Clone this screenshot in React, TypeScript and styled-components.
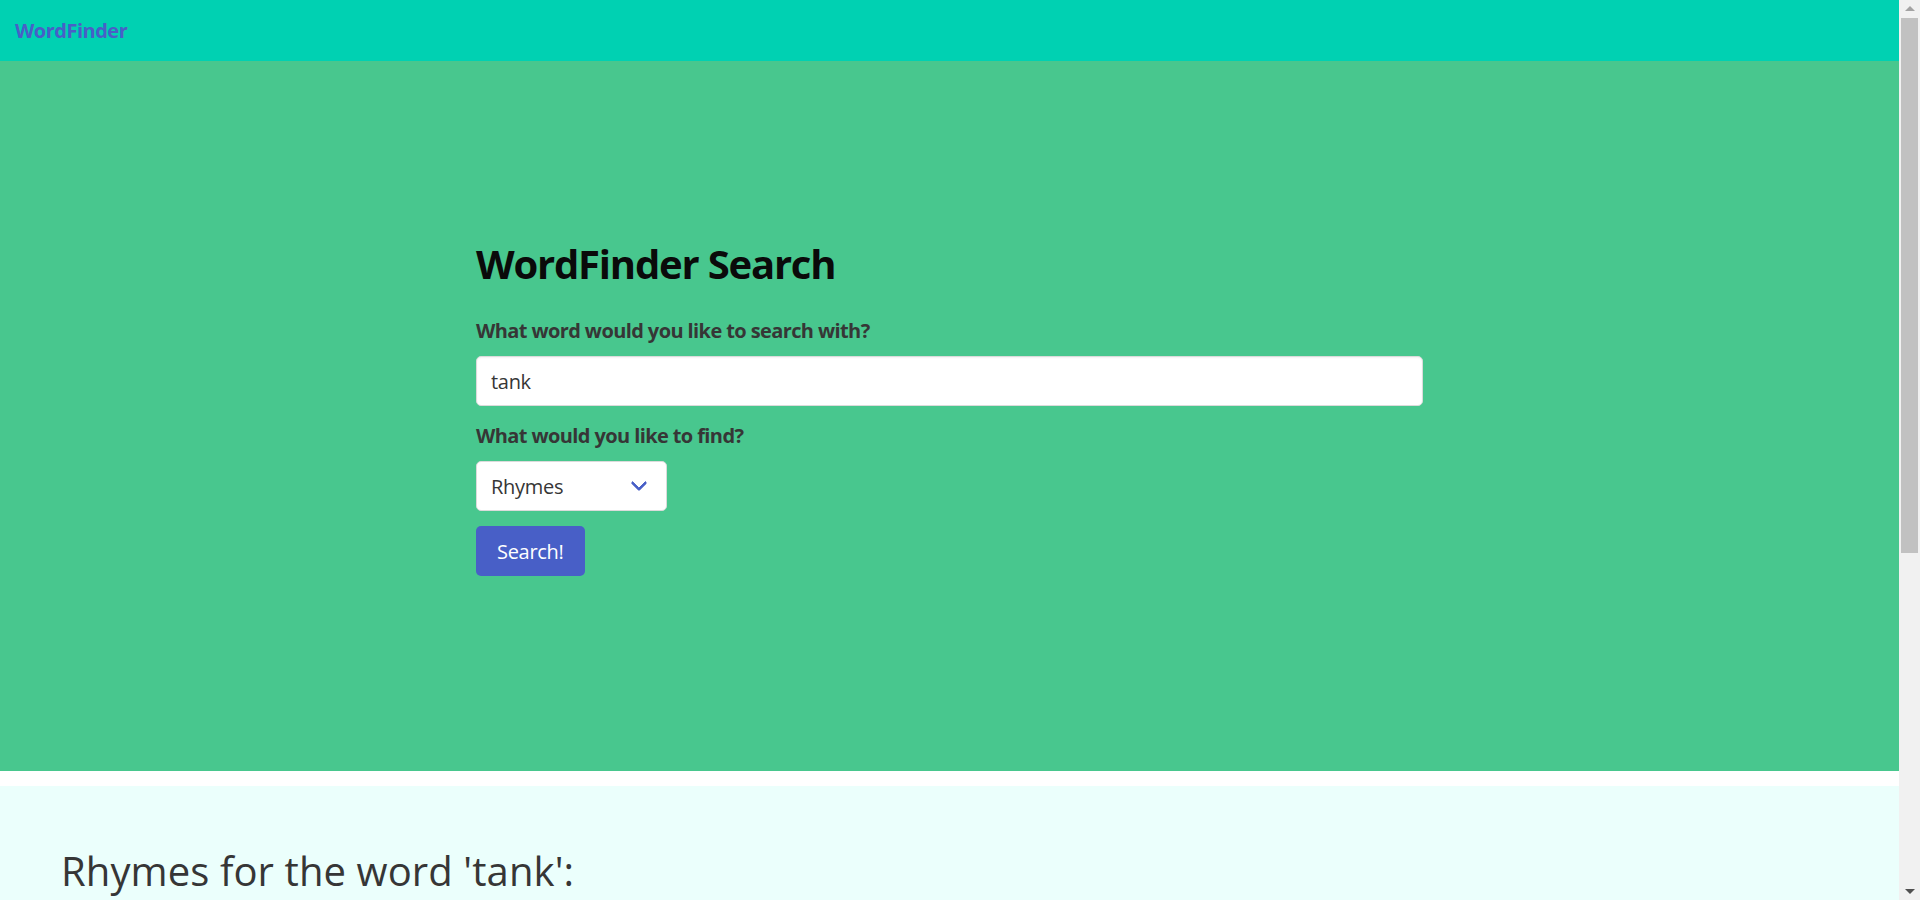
import React, {useState} from 'react';
import styled, {createGlobalStyle} from 'styled-components';

const GlobalStyle = createGlobalStyle`
  html, body {
    margin: 0;
    height: 100%;
    overflow: hidden;
    background-color: #fff;
  }

  body {
    font-family: "Open Sans", "Noto Sans", sans-serif;
    color: #4a4a4a;
  }

  *, *::before, *::after {
    box-sizing: border-box;
  }
`;

const Layout = styled.div`
  display: flex;
  height: 100vh;
`;

const Page = styled.main`
  flex: 1;
  min-width: 0;
  overflow-y: auto;
  scrollbar-width: none;
`;

// window scrollbar as seen in the screenshot
const ScrollBar = styled.aside`
  display: flex;
  flex-direction: column;
  width: 21px;
  background-color: #f1f1f1;
`;

const ScrollButton = styled.div<{$down?: boolean}>`
  display: flex;
  justify-content: center;
  align-items: center;
  height: 17px;

  &::before {
    content: '';
    width: 0;
    height: 0;
    border-left: 5px solid transparent;
    border-right: 5px solid transparent;
    ${(props) => props.$down
      ? 'border-top: 5px solid #505050;'
      : 'border-bottom: 5px solid #a3a3a3;'}
  }
`;

const ScrollTrack = styled.div`
  flex: 1;
  padding: 1px 2px 0;
`;

const ScrollThumb = styled.div`
  height: 535px;
  background-color: #c1c1c1;
`;

const Navbar = styled.nav`
  display: flex;
  align-items: center;
  height: 61px;
  background-color: #00d1b2;
`;

const Brand = styled.a`
  padding: 0 15px;
  font-size: 20px;
  font-weight: 700;
  letter-spacing: -0.5px;
  color: #485fc7;
  text-decoration: none;
  cursor: pointer;
`;

const Hero = styled.section`
  padding: 180px 30px;
  background-color: #48c78e;
`;

const Container = styled.div`
  width: 947px;
  margin: 0 auto;
`;

const Title = styled.h1`
  margin: 0 0 30px;
  font-size: 40px;
  font-weight: 700;
  letter-spacing: -1.2px;
  line-height: 1.125;
  color: #0a0a0a;
`;

const Field = styled.div`
  margin-bottom: 15px;
`;

const Label = styled.label`
  display: block;
  margin-bottom: 10px;
  font-size: 20px;
  font-weight: 700;
  letter-spacing: -0.6px;
  line-height: 1.5;
  color: #363636;
`;

const Input = styled.input`
  display: block;
  width: 100%;
  height: 50px;
  padding: 9px 14px;
  font-family: inherit;
  font-size: 20px;
  letter-spacing: -0.3px;
  color: #363636;
  background-color: #fff;
  border: 1px solid #dbdbdb;
  border-radius: 5px;
  box-shadow: inset 0 1px 2px rgba(10, 10, 10, 0.05);
  outline: none;
`;

const SelectWrap = styled.div`
  position: relative;
  width: 191px;
  height: 50px;

  &::after {
    content: '';
    position: absolute;
    top: 50%;
    right: 22px;
    width: 12px;
    height: 12px;
    margin-top: -9px;
    border: 3.5px solid #485fc7;
    border-top: 0;
    border-right: 0;
    border-radius: 2px;
    transform: rotate(-45deg);
    pointer-events: none;
  }
`;

const Select = styled.select`
  width: 100%;
  height: 100%;
  padding: 0 50px 0 14px;
  font-family: inherit;
  font-size: 20px;
  letter-spacing: -0.3px;
  color: #363636;
  background-color: #fff;
  border: 1px solid #dbdbdb;
  border-radius: 5px;
  appearance: none;
  outline: none;
  cursor: pointer;
`;

const Button = styled.button`
  height: 50px;
  padding: 0 20px;
  font-family: inherit;
  font-size: 20px;
  letter-spacing: -0.3px;
  color: #fff;
  background-color: #485fc7;
  border: 1px solid transparent;
  border-radius: 5px;
  cursor: pointer;
`;

const Results = styled.section`
  margin-top: 15px;
  padding: 62px 61px 60px;
  min-height: 671px;
  background-color: #ebfffc;
`;

const ResultsTitle = styled.h2`
  margin: 0;
  font-size: 40px;
  font-weight: 400;
  letter-spacing: 0.1px;
  line-height: 1.125;
  color: #363636;
`;

const App = () => {
  const [word, setWord] = useState('tank');
  const [kind, setKind] = useState('Rhymes');

  return (
    <Layout>
      <GlobalStyle />
      <Page>
        <Navbar>
          <Brand>WordFinder</Brand>
        </Navbar>

        <Hero>
          <Container>
            <Title>WordFinder Search</Title>
            <Field>
              <Label htmlFor="word">What word would you like to search with?</Label>
              <Input id="word" value={word} onChange={(e) => setWord(e.target.value)} />
            </Field>
            <Field>
              <Label htmlFor="kind">What would you like to find?</Label>
              <SelectWrap>
                <Select id="kind" value={kind} onChange={(e) => setKind(e.target.value)}>
                  <option>Rhymes</option>
                  <option>Synonyms</option>
                  <option>Antonyms</option>
                </Select>
              </SelectWrap>
            </Field>
            <Field>
              <Button>Search!</Button>
            </Field>
          </Container>
        </Hero>

        <Results>
          <ResultsTitle>Rhymes for the word '{word}':</ResultsTitle>
        </Results>
      </Page>

      <ScrollBar>
        <ScrollButton />
        <ScrollTrack>
          <ScrollThumb />
        </ScrollTrack>
        <ScrollButton $down />
      </ScrollBar>
    </Layout>
  );
};

export default App;
